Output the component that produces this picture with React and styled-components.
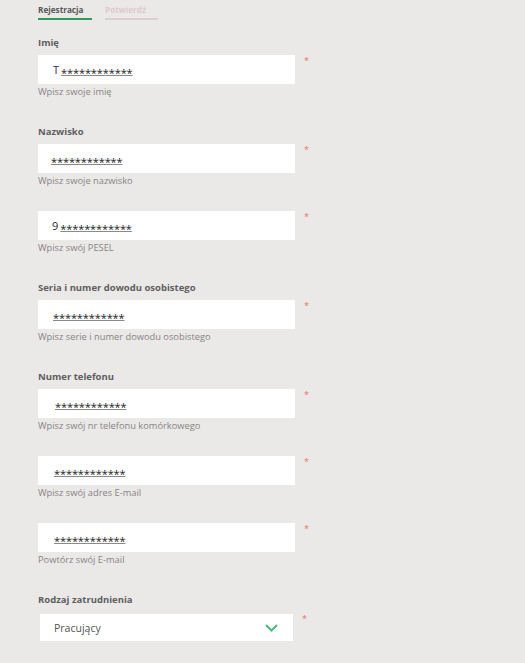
import React from "react";
import styled, { createGlobalStyle } from "styled-components";

const Global = createGlobalStyle`
  html, body { margin: 0; padding: 0; background: #ebe8e8; }
  body { font-family: "Open Sans", "Noto Sans", sans-serif; }
`;

const Page = styled.div`
  background: #ebe8e8;
  min-height: 663px;
  padding: 0 0 0 38px;
  box-sizing: border-box;
`;

const Tabs = styled.div`
  display: flex;
  gap: 13px;
  padding-top: 3px;
`;

const Tab = styled.div`
  width: ${(p) => p.$w}px;
  font-size: 8.2px;
  font-weight: 700;
  line-height: 13px;
  padding-bottom: 2px;
  color: ${(p) => (p.$active ? "#575757" : "#dccbce")};
  border-bottom: ${(p) => (p.$active ? "2px solid #2f9a5b" : "2px solid #dccfd1")};
`;

const Form = styled.div`
  display: flex;
  flex-direction: column;
  gap: 23px;
  padding-top: 13px;
`;

const Field = styled.div`
  display: flex;
  flex-direction: column;
`;

const Label = styled.div`
  font-size: 9.5px;
  font-weight: 700;
  color: #5e5e5e;
  line-height: 16px;
  margin: 2px 0 4px;
`;

const Row = styled.div`
  display: flex;
  align-items: flex-start;
`;

const Box = styled.div`
  width: 257px;
  height: 29px;
  background: #ffffff;
  box-sizing: border-box;
  padding-left: ${(p) => p.$indent}px;
  font-size: 11px;
  line-height: 29px;
  color: #2a2a2a;
  white-space: nowrap;
`;

const Lead = styled.span`
  color: ${(p) => p.$color || "#2a2a2a"};
  margin-right: 2px;
`;

const Mask = styled.span`
  vertical-align: -3px;
  color: #222;
  text-decoration: underline;
  text-decoration-color: #8a8a8a;
  text-underline-offset: -2px;
  letter-spacing: -0.1px;
`;

const Star = styled.span`
  color: #e07563;
  font-size: 9px;
  line-height: 10px;
  margin-left: 9px;
  margin-top: 1px;
`;

const Help = styled.div`
  font-size: 9.3px;
  color: #878484;
  line-height: 14px;
  margin-top: 1px;
`;

const Select = styled.div`
  width: 253px;
  height: 27px;
  margin: 2px;
  background: #ffffff;
  box-sizing: border-box;
  display: flex;
  align-items: center;
  justify-content: space-between;
  padding: 0 15px 0 14px;
  font-size: 10.5px;
  color: #555;
`;

const SelectStar = styled(Star)`
  margin-left: 7px;
  margin-top: 2px;
`;

const fields = [
  { label: "Imię", lead: "T", leadColor: "#4a1a55", help: "Wpisz swoje imię", indent: 15 },
  { label: "Nazwisko", help: "Wpisz swoje nazwisko", indent: 13 },
  { lead: "9", help: "Wpisz swój PESEL", indent: 14 },
  { label: "Seria i numer dowodu osobistego", help: "Wpisz serie i numer dowodu osobistego", indent: 15 },
  { label: "Numer telefonu", help: "Wpisz swój nr telefonu komórkowego", indent: 17 },
  { help: "Wpisz swój adres E-mail", indent: 16 },
  { help: "Powtórz swój E-mail", indent: 16 },
];

export default function App() {
  return (
    <>
      <Global />
      <Page>
        <Tabs>
          <Tab $active $w={54}>Rejestracja</Tab>
          <Tab $w={53}>Potwierdź</Tab>
        </Tabs>
        <Form>
          {fields.map((f, i) => (
            <Field key={i}>
              {f.label && <Label>{f.label}</Label>}
              <Row>
                <Box $indent={f.indent}>
                  {f.lead && <Lead $color={f.leadColor}>{f.lead}</Lead>}
                  <Mask>************</Mask>
                </Box>
                <Star>*</Star>
              </Row>
              <Help>{f.help}</Help>
            </Field>
          ))}
          <Field>
            <Label>Rodzaj zatrudnienia</Label>
            <Row>
              <Select>
                <span>Pracujący</span>
                <svg width="13" height="8" viewBox="0 0 13 8">
                  <polyline points="1,1 6.5,6.5 12,1" fill="none" stroke="#4dbb7b" strokeWidth="2" />
                </svg>
              </Select>
              <SelectStar>*</SelectStar>
            </Row>
          </Field>
        </Form>
      </Page>
    </>
  );
}
